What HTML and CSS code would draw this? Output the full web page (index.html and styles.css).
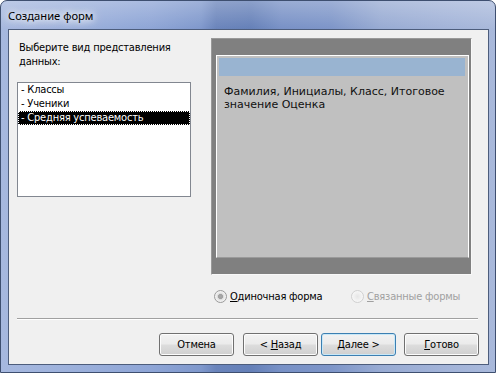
FILE: index.html
```html
<!DOCTYPE html>
<html lang="ru">
<head>
<meta charset="utf-8">
<title>Создание форм</title>
<link rel="stylesheet" href="styles.css">
</head>
<body>
<div class="window">
  <div class="titlebar"><span class="title">Создание форм</span></div>
  <div class="client">
    <div class="top">
      <div class="leftcol">
        <div class="prompt">Выберите вид представления данных:</div>
        <ul class="listbox">
          <li class="item">- Классы</li>
          <li class="item">- Ученики</li>
          <li class="item selected">- Средняя успеваемость</li>
        </ul>
      </div>
      <div class="preview">
        <div class="preview-inner">
          <div class="preview-bar"></div>
          <div class="preview-text">Фамилия, Инициалы, Класс, Итоговое значение Оценка</div>
        </div>
      </div>
    </div>
    <div class="radios">
      <div class="radio checked"><span class="radio-dot"></span><span class="radio-label"><u>О</u>диночная форма</span></div>
      <div class="radio disabled"><span class="radio-dot"></span><span class="radio-label"><u>С</u>вязанные формы</span></div>
    </div>
    <div class="separator"></div>
    <div class="buttons">
      <button class="btn">Отмена</button>
      <button class="btn btn-back">&lt; <u>Н</u>азад</button>
      <button class="btn btn-default"><u>Д</u>алее &gt;</button>
      <button class="btn btn-finish"><u>Г</u>отово</button>
    </div>
  </div>
</div>
</body>
</html>
```

FILE: styles.css
```css
html, body {
  margin: 0;
  padding: 0;
  background: #ffffff;
}

.window {
  width: 496px;
  height: 373px;
  box-sizing: border-box;
  border: 1px solid #3e4f70;
  border-radius: 7px 7px 0 0;
  padding: 0 6px 7px 7px;
  display: flex;
  flex-direction: column;
  background:
    linear-gradient(180deg, rgba(255,255,255,0.25) 0px, rgba(255,255,255,0) 28px),
    linear-gradient(90deg, #a6b8df 0px, #9eb2dc 60px, #8ea5d6 150px, #7f98cc 200px, #6a84bb 215px, #6580b8 250px, #7891c6 280px, #7d95c8 330px, #98abd3 380px, #a2b3d8 440px, #a9b9db 496px);
  font-family: "DejaVu Sans Condensed", "DejaVu Sans", sans-serif;
  font-size: 11px;
  letter-spacing: -0.2px;
  color: #000;
}

.titlebar {
  height: 28px;
  display: flex;
  align-items: center;
  flex: none;
}

.title {
  font-family: "Noto Sans", "Open Sans", sans-serif;
  font-size: 11.2px;
  letter-spacing: 0;
  padding-top: 1px;
  color: #000;
  text-shadow: 0 0 6px #ffffff, 0 0 10px #ffffff, 0 0 14px rgba(255,255,255,0.8);
}

.client {
  flex: 1;
  border: 1px solid #4d5d7c;
  background: #f0f0f0;
  display: flex;
  flex-direction: column;
}

.top {
  display: flex;
  padding: 8px 0 0 8px;
  gap: 20px;
}

.leftcol {
  width: 174px;
  display: flex;
  flex-direction: column;
}

.prompt {
  margin-top: 3px;
  padding-left: 2px;
  line-height: 14px;
  height: 28px;
}

.listbox {
  list-style: none;
  margin: 13px 0 0 0;
  padding: 0;
  height: 115px;
  box-sizing: border-box;
  border: 1px solid #828790;
  background: #ffffff;
}

.item {
  height: 14px;
  line-height: 13px;
  padding-left: 3px;
  box-sizing: border-box;
}

.item.selected {
  background: #000000;
  color: #ffffff;
  outline: 1px dotted #ffffff;
  outline-offset: -1px;
}

.preview {
  width: 261px;
  height: 237px;
  box-sizing: border-box;
  background: #808080;
  border-top: 1px solid #999999;
  border-left: 1px solid #999999;
  border-right: 1px solid #f8f8f8;
  border-bottom: 1px solid #f8f8f8;
  padding: 16px 2px 16px 4px;
}

.preview-inner {
  height: 100%;
  box-sizing: border-box;
  background: #c0c0c0;
  border-top: 1px solid #ffffff;
  border-left: 1px solid #ffffff;
  border-right: 1px solid #ffffff;
  border-bottom: 1px solid #9a9a9a;
  padding: 2px 3px 0 2px;
}

.preview-bar {
  height: 18px;
  background: #99b4d1;
}

.preview-text {
  margin-top: 9px;
  padding-left: 5px;
  line-height: 13px;
  width: 225px;
  font-family: "DejaVu Sans", sans-serif;
  letter-spacing: 0;
  color: #101010;
}

.radios {
  display: flex;
  margin-top: 14px;
  padding-left: 205px;
  height: 15px;
  align-items: center;
}

.radio {
  display: flex;
  align-items: center;
  gap: 3px;
}

.radio.checked {
  width: 137px;
}

.radio-dot {
  width: 13px;
  height: 13px;
  box-sizing: border-box;
  border-radius: 50%;
  border: 1px solid #9a9a9a;
  background: radial-gradient(circle at 50% 50%, #a8a8a8 0px, #a0a0a0 2.2px, #d9d9d9 2.8px, #eaeaea 4px, #f6f6f6 6px);
  flex: none;
}

.radio.disabled .radio-dot {
  border-color: #d0d0d0;
  background: radial-gradient(circle at 50% 50%, #e6e6e6 0px, #f2f2f2 4px, #f8f8f8 6px);
}

.radio.disabled .radio-label {
  color: #a0a0a0;
}

.separator {
  margin: 14px 10px 0 8px;
  height: 0;
  border-top: 1px solid #a0a0a0;
  border-bottom: 1px solid #ffffff;
}

.buttons {
  display: flex;
  justify-content: flex-end;
  margin-top: 13px;
  padding-right: 9px;
}

.btn {
  width: 75px;
  height: 23px;
  box-sizing: border-box;
  font-family: "DejaVu Sans Condensed", "DejaVu Sans", sans-serif;
  font-size: 11px;
  letter-spacing: -0.2px;
  color: #000;
  border: 1px solid #707070;
  border-radius: 3px;
  background: linear-gradient(180deg, #f2f2f2 0%, #ebebeb 48%, #dddddd 52%, #cfcfcf 100%);
  box-shadow: inset 0 0 0 1px #fcfcfc;
  padding: 0;
  margin: 0;
}

.btn-back {
  margin-left: 9px;
}

.btn-default {
  margin-left: 3px;
  border-color: #3c7fb1;
  box-shadow: inset 0 0 0 1px #c8e8f8;
}

.btn-finish {
  margin-left: 8px;
}
```
